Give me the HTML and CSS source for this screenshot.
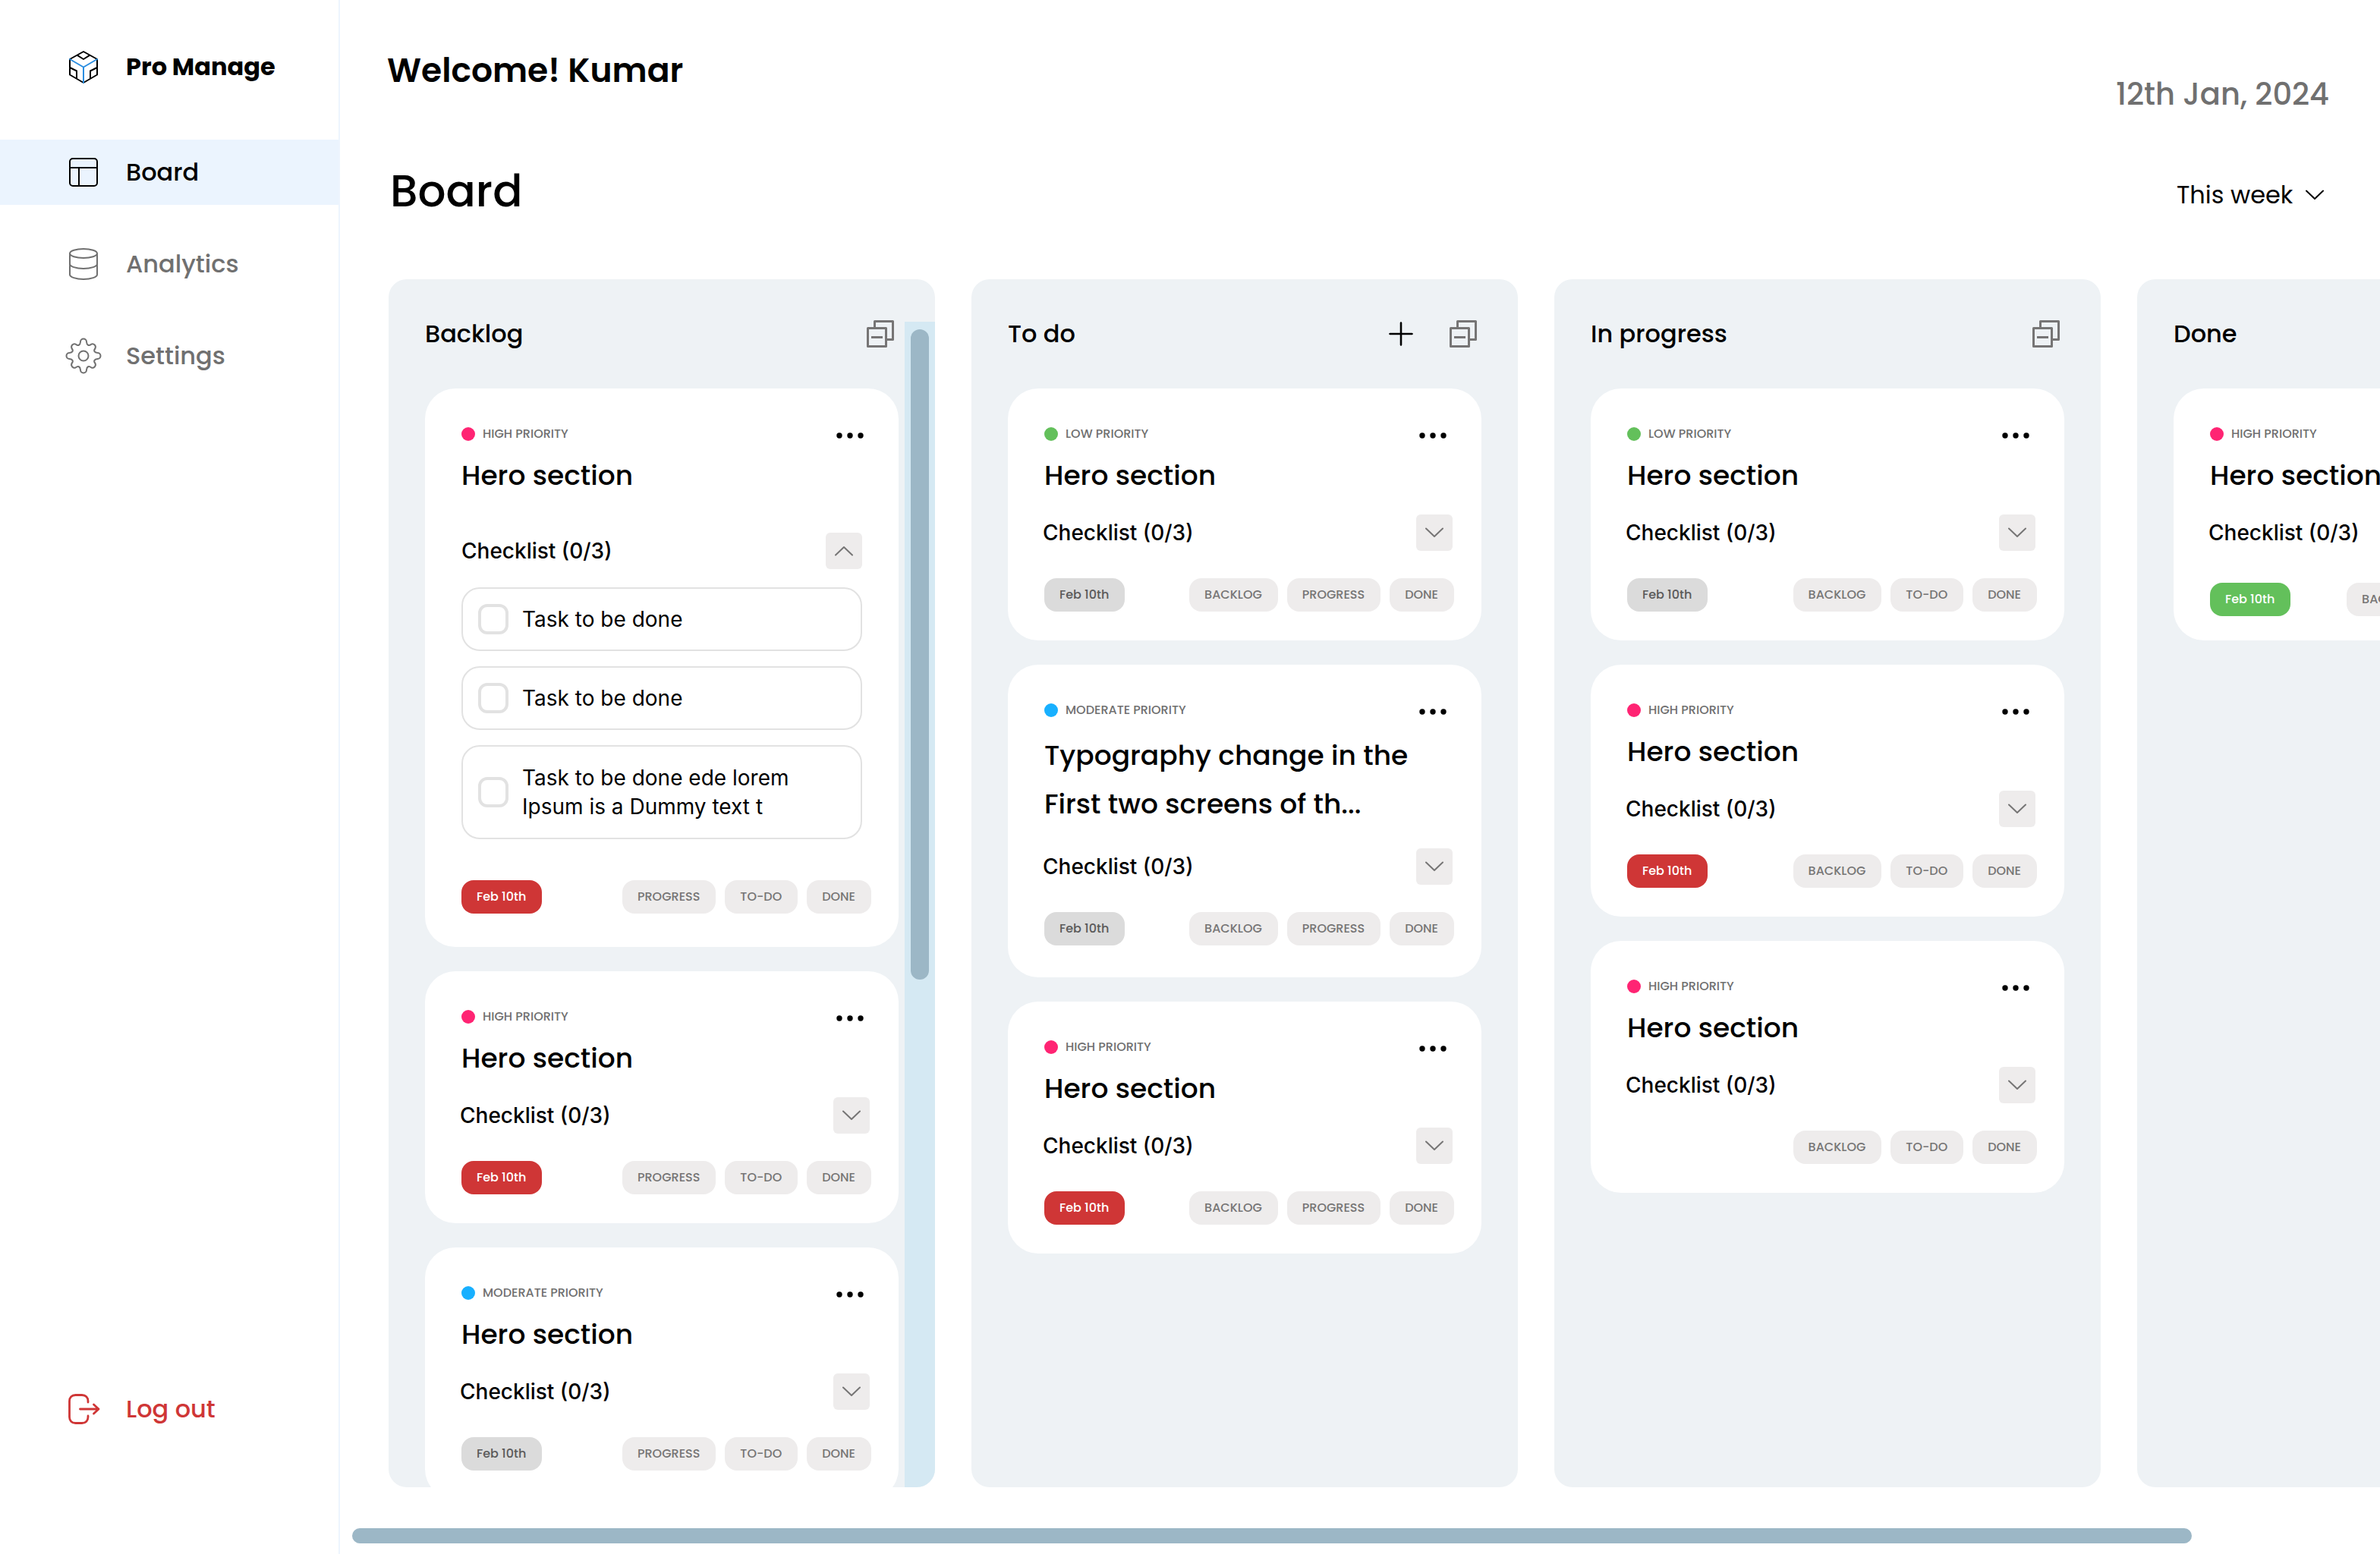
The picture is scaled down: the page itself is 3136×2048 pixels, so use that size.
FILE: index.html
```html
<!DOCTYPE html>
<html lang="en">
<head>
<meta charset="utf-8">
<title>Pro Manage</title>
<link rel="stylesheet" href="styles.css">
</head>
<body>
<svg class="sprite" aria-hidden="true">
  <symbol id="down" viewBox="0 0 24 14"><path d="M1 1.500l11 10.500 11-10.500" fill="none" stroke="currentColor" stroke-width="2" stroke-linecap="round" stroke-linejoin="round"/></symbol>
  <symbol id="up" viewBox="0 0 24 14"><path d="M1 12.500l11-10.500 11 10.500" fill="none" stroke="currentColor" stroke-width="2" stroke-linecap="round" stroke-linejoin="round"/></symbol>
  <symbol id="dots" viewBox="0 0 36 8"><circle cx="4" cy="4" r="3.700"/><circle cx="18" cy="4" r="3.700"/><circle cx="32" cy="4" r="3.700"/></symbol>
  <symbol id="collapse" viewBox="0 0 36 36"><g fill="none" stroke="currentColor" stroke-width="3" stroke-linejoin="round"><path d="M10.500 10V1.500h24v24H26"/><path d="M1.500 10.500h24v24h-24z"/><path d="M6 22.500h15"/></g></symbol>
</svg>
<div class="app">
  <aside class="sidebar">
    <div class="brand">
      <svg class="icon" viewBox="0 0 48 48" fill="none" stroke="#000" stroke-width="2" stroke-linecap="round" stroke-linejoin="round"><path d="M24 4L42 14V34.500L24 45 6 34.500V14zM15.500 8.700L24 14l8.500-5.300M6 25l9 4.500V39M42 25l-9 4.500V39"/><path d="M6 14l18 10.500L42 14M24 24.500V45" stroke="#2a8de0"/></svg>
      <span>Pro Manage</span>
    </div>
    <nav class="nav">
      <a class="nav-link active" href="#board"><svg class="icon" viewBox="0 0 48 48" fill="none" stroke="currentColor" stroke-width="2"><rect x="6" y="6" width="36" height="36" rx="4"/><path d="M6 18h36M18 18v24"/></svg><span>Board</span></a>
      <a class="nav-link" href="#analytics"><svg class="icon" viewBox="0 0 48 48" fill="none" stroke="currentColor" stroke-width="2"><ellipse cx="24" cy="10" rx="18" ry="6"/><path d="M6 10v28c0 3 8 6 18 6s18-3 18-6V10M6 24c0 3 8 6 18 6s18-3 18-6"/></svg><span>Analytics</span></a>
      <a class="nav-link" href="#settings"><svg class="icon" viewBox="0 0 48 48" fill="none" stroke="currentColor" stroke-width="2" stroke-linejoin="round"><path d="M20 5.500a4 4 0 0 1 8 0c.4 4.500 3 5.800 6.200 3.200a4 4 0 0 1 5.300 5.300c-2.600 3.200-1.300 5.600 3 6a4 4 0 0 1 0 8c-4.300.4-5.600 2.800-3 6a4 4 0 0 1-5.300 5.300c-3.200-2.600-5.800-1.300-6.200 3.200a4 4 0 0 1-8 0c-.4-4.500-3-5.800-6.200-3.200a4 4 0 0 1-5.300-5.300c2.600-3.200 1.300-5.600-3-6a4 4 0 0 1 0-8c4.300-.4 5.600-2.800 3-6a4 4 0 0 1 5.300-5.300c3.200 2.600 5.800 1.300 6.200-3.200z"/><circle cx="24" cy="24" r="6.500"/></svg><span>Settings</span></a>
    </nav>
    <a class="nav-link logout" href="#logout"><svg class="icon" viewBox="0 0 48 48" fill="none" stroke="currentColor" stroke-width="2.800" stroke-linecap="round" stroke-linejoin="round"><path d="M30 15v-1.500c0-4.500-3-8-8-8h-8.500c-5 0-8 3.500-8 8v21c0 4.500 3 8 8 8H22c5 0 8-3.500 8-8V33M19.500 24H44M37.500 18l6.500 6-6.500 6"/></svg><span>Log out</span></a>
  </aside>
  <main class="main">
    <header class="topbar">
      <p class="welcome">Welcome! Kumar</p>
      <time class="today" datetime="2024-01-12">12th Jan, 2024</time>
    </header>
    <div class="heading">
      <h1>Board</h1>
      <label class="range"><select aria-label="Period"><option>This week</option></select><svg class="chevron"><use href="#down"/></svg></label>
    </div>
    <div class="board">
      <section class="column">
        <header class="column-head"><h2>Backlog</h2><button class="plain" aria-label="Collapse all"><svg class="collapse"><use href="#collapse"/></svg></button></header>
        <article class="card open">
          <div class="card-top"><span class="priority high">HIGH PRIORITY</span><button class="plain" aria-label="More"><svg class="dots"><use href="#dots"/></svg></button></div>
          <h3>Hero section</h3>
          <div class="checklist"><span>Checklist (0/3)</span><button class="toggle" aria-label="Collapse"><svg class="chevron"><use href="#up"/></svg></button></div>
          <div class="tasks">
            <label class="task"><input type="checkbox"><span>Task to be done</span></label>
            <label class="task"><input type="checkbox"><span>Task to be done</span></label>
            <label class="task tall"><input type="checkbox"><span>Task to be done ede lorem Ipsum is a Dummy text t</span></label>
          </div>
          <div class="card-foot"><time class="due late">Feb 10th</time><button class="move">PROGRESS</button><button class="move">TO-DO</button><button class="move">DONE</button></div>
        </article>
        <article class="card">
          <div class="card-top"><span class="priority high">HIGH PRIORITY</span><button class="plain" aria-label="More"><svg class="dots"><use href="#dots"/></svg></button></div>
          <h3>Hero section</h3>
          <div class="checklist"><span>Checklist (0/3)</span><button class="toggle" aria-label="Expand"><svg class="chevron"><use href="#down"/></svg></button></div>
          <div class="card-foot"><time class="due late">Feb 10th</time><button class="move">PROGRESS</button><button class="move">TO-DO</button><button class="move">DONE</button></div>
        </article>
        <article class="card">
          <div class="card-top"><span class="priority moderate">MODERATE PRIORITY</span><button class="plain" aria-label="More"><svg class="dots"><use href="#dots"/></svg></button></div>
          <h3>Hero section</h3>
          <div class="checklist"><span>Checklist (0/3)</span><button class="toggle" aria-label="Expand"><svg class="chevron"><use href="#down"/></svg></button></div>
          <div class="card-foot"><time class="due">Feb 10th</time><button class="move">PROGRESS</button><button class="move">TO-DO</button><button class="move">DONE</button></div>
        </article>
        <div class="scroll-track"><div class="scroll-thumb"></div></div>
      </section>
      <section class="column">
        <header class="column-head"><h2>To do</h2><button class="plain" aria-label="Add task"><svg class="plus" viewBox="0 0 32 32"><path d="M16 1.500v29M1.500 16h29" stroke="#000" stroke-width="2.600" stroke-linecap="round"/></svg></button><button class="plain" aria-label="Collapse all"><svg class="collapse"><use href="#collapse"/></svg></button></header>
        <article class="card">
          <div class="card-top"><span class="priority low">LOW PRIORITY</span><button class="plain" aria-label="More"><svg class="dots"><use href="#dots"/></svg></button></div>
          <h3>Hero section</h3>
          <div class="checklist"><span>Checklist (0/3)</span><button class="toggle" aria-label="Expand"><svg class="chevron"><use href="#down"/></svg></button></div>
          <div class="card-foot"><time class="due">Feb 10th</time><button class="move">BACKLOG</button><button class="move">PROGRESS</button><button class="move">DONE</button></div>
        </article>
        <article class="card long">
          <div class="card-top"><span class="priority moderate">MODERATE PRIORITY</span><button class="plain" aria-label="More"><svg class="dots"><use href="#dots"/></svg></button></div>
          <h3>Typography change in the<br>First two screens of th...</h3>
          <div class="checklist"><span>Checklist (0/3)</span><button class="toggle" aria-label="Expand"><svg class="chevron"><use href="#down"/></svg></button></div>
          <div class="card-foot"><time class="due">Feb 10th</time><button class="move">BACKLOG</button><button class="move">PROGRESS</button><button class="move">DONE</button></div>
        </article>
        <article class="card">
          <div class="card-top"><span class="priority high">HIGH PRIORITY</span><button class="plain" aria-label="More"><svg class="dots"><use href="#dots"/></svg></button></div>
          <h3>Hero section</h3>
          <div class="checklist"><span>Checklist (0/3)</span><button class="toggle" aria-label="Expand"><svg class="chevron"><use href="#down"/></svg></button></div>
          <div class="card-foot"><time class="due late">Feb 10th</time><button class="move">BACKLOG</button><button class="move">PROGRESS</button><button class="move">DONE</button></div>
        </article>
      </section>
      <section class="column">
        <header class="column-head"><h2>In progress</h2><button class="plain" aria-label="Collapse all"><svg class="collapse"><use href="#collapse"/></svg></button></header>
        <article class="card">
          <div class="card-top"><span class="priority low">LOW PRIORITY</span><button class="plain" aria-label="More"><svg class="dots"><use href="#dots"/></svg></button></div>
          <h3>Hero section</h3>
          <div class="checklist"><span>Checklist (0/3)</span><button class="toggle" aria-label="Expand"><svg class="chevron"><use href="#down"/></svg></button></div>
          <div class="card-foot"><time class="due">Feb 10th</time><button class="move">BACKLOG</button><button class="move">TO-DO</button><button class="move">DONE</button></div>
        </article>
        <article class="card">
          <div class="card-top"><span class="priority high">HIGH PRIORITY</span><button class="plain" aria-label="More"><svg class="dots"><use href="#dots"/></svg></button></div>
          <h3>Hero section</h3>
          <div class="checklist"><span>Checklist (0/3)</span><button class="toggle" aria-label="Expand"><svg class="chevron"><use href="#down"/></svg></button></div>
          <div class="card-foot"><time class="due late">Feb 10th</time><button class="move">BACKLOG</button><button class="move">TO-DO</button><button class="move">DONE</button></div>
        </article>
        <article class="card">
          <div class="card-top"><span class="priority high">HIGH PRIORITY</span><button class="plain" aria-label="More"><svg class="dots"><use href="#dots"/></svg></button></div>
          <h3>Hero section</h3>
          <div class="checklist"><span>Checklist (0/3)</span><button class="toggle" aria-label="Expand"><svg class="chevron"><use href="#down"/></svg></button></div>
          <div class="card-foot"><button class="move">BACKLOG</button><button class="move">TO-DO</button><button class="move">DONE</button></div>
        </article>
      </section>
      <section class="column">
        <header class="column-head"><h2>Done</h2><button class="plain" aria-label="Collapse all"><svg class="collapse"><use href="#collapse"/></svg></button></header>
        <article class="card finished">
          <div class="card-top"><span class="priority high">HIGH PRIORITY</span><button class="plain" aria-label="More"><svg class="dots"><use href="#dots"/></svg></button></div>
          <h3>Hero section</h3>
          <div class="checklist"><span>Checklist (0/3)</span><button class="toggle" aria-label="Expand"><svg class="chevron"><use href="#down"/></svg></button></div>
          <div class="card-foot"><time class="due met">Feb 10th</time><button class="move">BACKLOG</button><button class="move">TO-DO</button><button class="move">PROGRESS</button></div>
        </article>
      </section>
    </div>
    <div class="board-scroll"><div class="board-thumb"></div></div>
  </main>
</div>
</body>
</html>
```
FILE: styles.css
```css
* { box-sizing: border-box; }

body {
  margin: 0;
  background: #fff;
  color: #000;
  font-family: Poppins, Inter, sans-serif;
  font-weight: 500;
}

h1, h2, h3, p { margin: 0; font-weight: 500; }
button, select, input { margin: 0; font: inherit; color: inherit; }
a { color: inherit; text-decoration: none; }
svg { display: block; flex: none; }

.sprite { position: absolute; width: 0; height: 0; }

.app { display: flex; height: 100vh; }

/* Sidebar */
.sidebar {
  display: flex;
  flex: none;
  flex-direction: column;
  width: 448px;
  padding: 64px 0 148px;
  border-right: 2px solid #edf5fe;
}

.brand, .nav-link {
  display: flex;
  align-items: center;
  gap: 32px;
  padding-left: 86px;
  font-size: 32px;
  line-height: 48px;
}

.brand { font-weight: 700; }
.icon { width: 48px; height: 48px; }
.nav { display: flex; flex-direction: column; gap: 35px; margin-top: 72px; }
.nav-link { height: 86px; color: #707070; }
.nav-link.active { background: #ebf4fe; color: #000; }
.nav-link.logout { margin-top: auto; color: #cf3636; }

/* Page header */
.main {
  display: flex;
  flex: 1;
  flex-direction: column;
  min-width: 0;
  padding-top: 60px;
}

.topbar, .heading {
  display: flex;
  justify-content: space-between;
  padding: 0 67px 0 62px;
}

.welcome { font-size: 44px; font-weight: 600; line-height: 66px; }
.today { padding-top: 34px; color: #707070; font-size: 40px; line-height: 60px; }
.heading { align-items: center; padding: 52px 74px 0 66px; }
.heading h1 { font-size: 58px; line-height: 92px; }
.range { display: flex; align-items: center; gap: 16px; padding-top: 10px; font-size: 32px; font-weight: 400; line-height: 48px; }
.range select { padding: 0; border: 0; background: none; appearance: none; }
.chevron { width: 24px; height: 14px; }

/* Board */
.board {
  display: flex;
  flex: 1;
  gap: 48px;
  min-height: 0;
  margin-top: 70px;
  padding-left: 64px;
  overflow: hidden;
}

.column {
  position: relative;
  display: flex;
  flex: none;
  flex-direction: column;
  gap: 32px;
  width: 720px;
  padding: 48px;
  border-radius: 24px;
  background: #eef2f5;
  overflow: hidden;
}

.column-head {
  display: flex;
  flex: none;
  align-items: center;
  gap: 48px;
  height: 48px;
  margin-bottom: 16px;
  padding-right: 6px;
}

.column-head h2 { margin-right: auto; font-size: 32px; line-height: 50px; }
.plain { padding: 0; border: 0; background: none; }
.collapse { width: 36px; height: 36px; color: #767575; }
.plus { width: 32px; height: 32px; }

.scroll-track {
  position: absolute;
  top: 56px;
  right: 0;
  bottom: 0;
  width: 40px;
  padding: 10px 8px;
  background: #d5e9f3;
}

.scroll-thumb { height: 56.5%; border-radius: 12px; background: #9cb7c6; }
.board-scroll { flex: none; padding: 54px 248px 14px 16px; }
.board-thumb { height: 20px; border-radius: 10px; background: #9cb7c6; }

/* Cards */
.card {
  flex: none;
  padding: 44px 36px 38px 48px;
  border-radius: 40px;
  background: #fff;
}

.card-top { display: flex; align-items: center; justify-content: space-between; height: 32px; padding-right: 10px; }
.card-top .plain { padding-top: 4px; }
.priority { display: flex; align-items: center; gap: 10px; color: #707070; font-size: 16px; line-height: 32px; }
.priority::before { width: 18px; height: 18px; border-radius: 50%; background: #ff2473; content: ""; }
.priority.low::before { background: #63c05b; }
.priority.moderate::before { background: #18b0ff; }
.dots { width: 36px; height: 8px; }
.card h3 { margin-top: 12px; font-size: 36px; line-height: 54px; }
.card.long h3 { line-height: 64px; }

.checklist {
  display: flex;
  align-items: center;
  justify-content: space-between;
  margin: 24px 2px 0 -2px;
  font-family: Inter, sans-serif;
  font-size: 28px;
  line-height: 48px;
}

.toggle {
  display: grid;
  place-items: center;
  width: 48px;
  height: 48px;
  padding: 0;
  border: 0;
  border-radius: 6px;
  background: #eeecec;
  color: #767575;
}

.card-foot { display: flex; gap: 12px; margin-top: 36px; font-size: 16px; line-height: 44px; }
.due { margin-right: auto; padding: 0 21px 0 20px; border-radius: 16px; background: #dbdbdb; color: #5a5a5a; }
.due.late { background: #cf3636; color: #fff; }
.due.met { background: #63c05b; color: #fff; }
.move { height: 44px; padding: 0 21px 0 20px; border: 0; border-radius: 16px; background: #eeecec; color: #767575; }
.move:first-child { margin-left: auto; }

.card.open { padding-bottom: 44px; }
.card.open .checklist { margin: 48px 12px 0 0; }
.card.open .card-foot { margin-top: 54px; }
.card.long { padding-bottom: 42px; }
.card.long .checklist { margin-top: 26px; }
.card.finished { padding-bottom: 32px; }
.card.finished .card-foot { margin-top: 42px; }

.tasks { display: flex; flex-direction: column; gap: 20px; margin-top: 24px; padding-right: 12px; }

.task {
  display: flex;
  align-items: center;
  gap: 18px;
  padding: 20px 60px 20px 20px;
  border: 2px solid #e2e2e2;
  border-radius: 24px;
  font-family: Inter, sans-serif;
  font-size: 28px;
  font-weight: 400;
  line-height: 38px;
}

.task.tall { padding-top: 22px; padding-bottom: 22px; }

.task input {
  flex: none;
  width: 40px;
  height: 40px;
  border: 4px solid #e2e2e2;
  border-radius: 12px;
  appearance: none;
}
```
